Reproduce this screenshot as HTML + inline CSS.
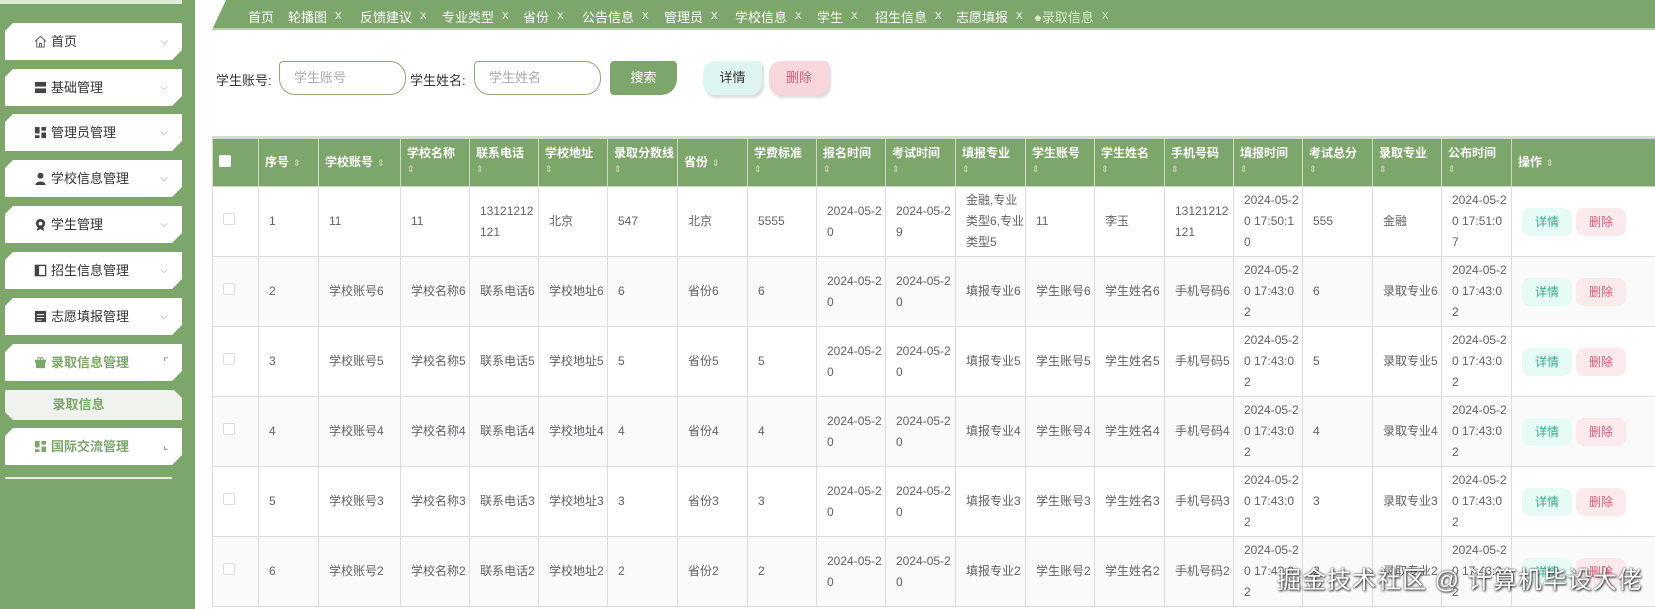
<!DOCTYPE html>
<html><head><meta charset="utf-8"><style>
*{box-sizing:border-box;margin:0;padding:0}
body{width:1655px;height:609px;overflow:hidden;background:#fff;font-family:"Liberation Sans","Noto Sans CJK SC",sans-serif;font-size:12px;color:#606266;position:relative}
.side{position:absolute;left:0;top:0;width:195px;height:609px;background:#7da66a}
.side .topline{position:absolute;left:0;top:0;width:182px;height:4px;background:#dfe9d8}
.item{position:absolute;left:5px;width:177px;height:37px;background:#fff;clip-path:polygon(8px 0,100% 0,100% calc(100% - 10px),calc(100% - 10px) 100%,0 100%,0 8px);font-size:13px;color:#333;line-height:37px;padding-left:46px}
.item .ic{position:absolute;left:29px;top:12px;width:13px;height:13px}
.item .ar{position:absolute;right:14px;top:0;color:#999;font-size:10px}
.item.g{color:#7da66a;font-weight:bold}
.sub{position:absolute;left:5px;top:390px;width:177px;height:30px;background:#f0f2ee;clip-path:polygon(0 0,calc(100% - 8px) 0,100% 8px,100% 100%,8px 100%,0 calc(100% - 8px));line-height:30px;text-align:center;color:#7da66a;font-size:13px;font-weight:bold;padding-right:30px}
.tabs{position:absolute;left:212px;top:0;width:1443px;height:30px;background:#7da66a;clip-path:polygon(14px 0,100% 0,100% 100%,0 100%);border-bottom:2px solid #b9cfae}
.tabs span{position:absolute;top:7px;color:#fff;font-size:13px}
.tabs i{font-style:normal;font-size:10px;margin-left:8px;position:relative;top:-3px}
.lbl{position:absolute;top:70px;font-size:13px;color:#333}
.inp{position:absolute;top:61px;height:34px;border:1px solid #8aa87a;border-radius:4px 16px 16px 16px;color:#aaa;font-size:13px;line-height:32px;padding-left:14px}
.btn{position:absolute;top:61px;height:34px;font-size:13px;line-height:34px;text-align:center}
table{position:absolute;left:212px;top:136px;border-collapse:collapse;table-layout:fixed;width:1533px;border-top:3px solid #d8d8d8}
th{background:#7da66a;color:#fff;font-weight:bold;font-size:12px;text-align:left;vertical-align:top;padding:6px 2px 0 6px;height:49px;border:1px solid #cfd9c8;line-height:16px;white-space:nowrap;overflow:hidden}
th small{display:block;color:#b7cdaa;font-size:9px}
th.m{vertical-align:middle;padding-top:0}
th.m small{display:inline;margin-left:4px}
td{border:1px solid #dcdcdc;padding:0 1px 0 10px;height:70px;line-height:21px;word-break:break-all;font-size:12px;color:#606266}
tr:nth-child(odd) td{background:#fafafa}
td.n{white-space:nowrap;overflow:hidden}
.cb{display:inline-block;width:12px;height:12px;border:1px solid #ddd;border-radius:2px;background:#fff}
.b1,.b2{display:inline-block;width:50px;height:28px;line-height:28px;text-align:center;border-radius:8px;font-size:12px}
.b1{background:#e6faf6;color:#3aa98a}.b2{background:#fbeaec;color:#d0607a;margin-left:4px}
.wm{position:absolute;left:1277px;top:560px;font-size:24px;color:#fff;text-shadow:0 0 2px #333,1px 1px 2px #333;white-space:nowrap;letter-spacing:1px}
</style></head><body>
<div class="side"><div class="topline"></div>
<div class="item" style="top:23px"><svg class="ic" viewBox="0 0 14 14"><path d="M1 7L7 1.5 13 7M3 6v7h8V6M6 13V9h2v4" fill="none" stroke="#555" stroke-width="1"/></svg>首页<span class="ar">⌵</span></div>
<div class="item" style="top:69px"><svg class="ic" viewBox="0 0 14 14"><rect x="1" y="1" width="12" height="5" fill="#444"/><rect x="1" y="8" width="12" height="5" fill="#444"/></svg>基础管理<span class="ar">⌵</span></div>
<div class="item" style="top:114px"><svg class="ic" viewBox="0 0 14 14"><rect x="1" y="1" width="5" height="7" fill="#444"/><rect x="8" y="1" width="5" height="4" fill="#444"/><rect x="8" y="7" width="5" height="6" fill="#444"/><rect x="1" y="10" width="5" height="3" fill="#444"/></svg>管理员管理<span class="ar">⌵</span></div>
<div class="item" style="top:160px"><svg class="ic" viewBox="0 0 14 14"><circle cx="7" cy="4" r="3.2" fill="#444"/><path d="M1.5 14c0-5 11-5 11 0z" fill="#444"/></svg>学校信息管理<span class="ar">⌵</span></div>
<div class="item" style="top:206px"><svg class="ic" viewBox="0 0 14 14"><circle cx="7" cy="6" r="5" fill="#444"/><circle cx="7" cy="6" r="2" fill="#fff"/><path d="M4 10l-1 4 4-2 4 2-1-4z" fill="#444"/></svg>学生管理<span class="ar">⌵</span></div>
<div class="item" style="top:252px"><svg class="ic" viewBox="0 0 14 14"><rect x="1.5" y="1.5" width="11" height="11" fill="none" stroke="#444" stroke-width="1.5"/><rect x="1.5" y="1.5" width="4" height="11" fill="#444"/></svg>招生信息管理<span class="ar">⌵</span></div>
<div class="item" style="top:298px"><svg class="ic" viewBox="0 0 14 14"><rect x="1" y="1" width="12" height="12" fill="#444"/><path d="M3 5h8M3 8h8M3 11h5" stroke="#fff"/></svg>志愿填报管理<span class="ar">⌵</span></div>
<div class="item g" style="top:344px"><svg class="ic" viewBox="0 0 14 14"><path d="M1 4h12v3H1zM2 7h10v6H2z" fill="#7da66a"/><path d="M4 4c0-3 3-3 3 0 0-3 3-3 3 0" fill="none" stroke="#7da66a"/></svg>录取信息管理<span class="ar">⌜</span></div>
<div class="sub">录取信息</div>
<div class="item g" style="top:428px"><svg class="ic" viewBox="0 0 14 14"><rect x="1" y="1" width="5" height="7" fill="#7da66a"/><rect x="8" y="1" width="5" height="4" fill="#7da66a"/><rect x="8" y="7" width="5" height="6" fill="#7da66a"/><rect x="1" y="10" width="5" height="3" fill="#7da66a"/></svg>国际交流管理<span class="ar">⌞</span></div>
<div style="position:absolute;left:5px;top:477px;width:167px;height:2px;background:#e6eee0"></div>
</div>
<div class="tabs">
<span style="left:36px">首页</span>
<span style="left:76px">轮播图<i>X</i></span>
<span style="left:148px">反馈建议<i>X</i></span>
<span style="left:230px">专业类型<i>X</i></span>
<span style="left:311px">省份<i>X</i></span>
<span style="left:370px">公告信息<i>X</i></span>
<span style="left:452px">管理员<i>X</i></span>
<span style="left:523px">学校信息<i>X</i></span>
<span style="left:605px">学生<i>X</i></span>
<span style="left:663px">招生信息<i>X</i></span>
<span style="left:744px">志愿填报<i>X</i></span>
<span style="left:822px;color:#d8ecc8">●录取信息<i>X</i></span>
</div>
<div class="lbl" style="left:216px">学生账号:</div>
<div class="inp" style="left:279px;width:127px">学生账号</div>
<div class="lbl" style="left:410px">学生姓名:</div>
<div class="inp" style="left:474px;width:127px">学生姓名</div>
<div class="btn" style="left:610px;width:67px;background:#7da66a;color:#fff;border-radius:4px 4px 16px 4px">搜索</div>
<div class="btn" style="left:703px;width:59px;background:#dff5f2;color:#333;border-radius:12px 4px 12px 12px;box-shadow:2px 3px 2px #ddd">详情</div>
<div class="btn" style="left:769px;width:60px;background:#f8d6dc;color:#d0607a;border-radius:12px 4px 12px 12px;box-shadow:2px 3px 2px #ddd">删除</div>
<table>
<colgroup><col style="width:46px"><col style="width:60px"><col style="width:82px"><col style="width:69px"><col style="width:69px"><col style="width:69px"><col style="width:70px"><col style="width:70px"><col style="width:69px"><col style="width:69px"><col style="width:70px"><col style="width:70px"><col style="width:69px"><col style="width:70px"><col style="width:69px"><col style="width:69px"><col style="width:70px"><col style="width:69px"><col style="width:70px"><col style="width:234px"></colgroup>
<tr><th class="m"><span class="cb" style="border:none"></span></th><th class="m">序号<small>⇕</small></th><th class="m">学校账号<small>⇕</small></th><th>学校名称<small>⇕</small></th><th>联系电话<small>⇕</small></th><th>学校地址<small>⇕</small></th><th>录取分数线<small>⇕</small></th><th class="m">省份<small>⇕</small></th><th>学费标准<small>⇕</small></th><th>报名时间<small>⇕</small></th><th>考试时间<small>⇕</small></th><th>填报专业<small>⇕</small></th><th>学生账号<small>⇕</small></th><th>学生姓名<small>⇕</small></th><th>手机号码<small>⇕</small></th><th>填报时间<small>⇕</small></th><th>考试总分<small>⇕</small></th><th>录取专业<small>⇕</small></th><th>公布时间<small>⇕</small></th><th class="m">操作<small>⇕</small></th></tr>
<tr><td><span class="cb"></span></td><td>1</td><td>11</td><td>11</td><td>13121212<br>121</td><td>北京</td><td>547</td><td>北京</td><td>5555</td><td>2024-05-2<br>0</td><td>2024-05-2<br>9</td><td>金融,专业类型6,专业类型5</td><td>11</td><td>李玉</td><td>13121212<br>121</td><td>2024-05-2<br>0 17:50:1<br>0</td><td>555</td><td>金融</td><td>2024-05-2<br>0 17:51:0<br>7</td><td><span class="b1">详情</span><span class="b2">删除</span></td></tr>
<tr><td><span class="cb"></span></td><td>2</td><td class="n">学校账号6</td><td class="n">学校名称6</td><td class="n">联系电话6</td><td class="n">学校地址6</td><td>6</td><td>省份6</td><td>6</td><td>2024-05-2<br>0</td><td>2024-05-2<br>0</td><td class="n">填报专业6</td><td class="n">学生账号6</td><td class="n">学生姓名6</td><td class="n">手机号码6</td><td>2024-05-2<br>0 17:43:0<br>2</td><td>6</td><td class="n">录取专业6</td><td>2024-05-2<br>0 17:43:0<br>2</td><td><span class="b1">详情</span><span class="b2">删除</span></td></tr>
<tr><td><span class="cb"></span></td><td>3</td><td class="n">学校账号5</td><td class="n">学校名称5</td><td class="n">联系电话5</td><td class="n">学校地址5</td><td>5</td><td>省份5</td><td>5</td><td>2024-05-2<br>0</td><td>2024-05-2<br>0</td><td class="n">填报专业5</td><td class="n">学生账号5</td><td class="n">学生姓名5</td><td class="n">手机号码5</td><td>2024-05-2<br>0 17:43:0<br>2</td><td>5</td><td class="n">录取专业5</td><td>2024-05-2<br>0 17:43:0<br>2</td><td><span class="b1">详情</span><span class="b2">删除</span></td></tr>
<tr><td><span class="cb"></span></td><td>4</td><td class="n">学校账号4</td><td class="n">学校名称4</td><td class="n">联系电话4</td><td class="n">学校地址4</td><td>4</td><td>省份4</td><td>4</td><td>2024-05-2<br>0</td><td>2024-05-2<br>0</td><td class="n">填报专业4</td><td class="n">学生账号4</td><td class="n">学生姓名4</td><td class="n">手机号码4</td><td>2024-05-2<br>0 17:43:0<br>2</td><td>4</td><td class="n">录取专业4</td><td>2024-05-2<br>0 17:43:0<br>2</td><td><span class="b1">详情</span><span class="b2">删除</span></td></tr>
<tr><td><span class="cb"></span></td><td>5</td><td class="n">学校账号3</td><td class="n">学校名称3</td><td class="n">联系电话3</td><td class="n">学校地址3</td><td>3</td><td>省份3</td><td>3</td><td>2024-05-2<br>0</td><td>2024-05-2<br>0</td><td class="n">填报专业3</td><td class="n">学生账号3</td><td class="n">学生姓名3</td><td class="n">手机号码3</td><td>2024-05-2<br>0 17:43:0<br>2</td><td>3</td><td class="n">录取专业3</td><td>2024-05-2<br>0 17:43:0<br>2</td><td><span class="b1">详情</span><span class="b2">删除</span></td></tr>
<tr><td><span class="cb"></span></td><td>6</td><td class="n">学校账号2</td><td class="n">学校名称2</td><td class="n">联系电话2</td><td class="n">学校地址2</td><td>2</td><td>省份2</td><td>2</td><td>2024-05-2<br>0</td><td>2024-05-2<br>0</td><td class="n">填报专业2</td><td class="n">学生账号2</td><td class="n">学生姓名2</td><td class="n">手机号码2</td><td>2024-05-2<br>0 17:43:0<br>2</td><td>2</td><td class="n">录取专业2</td><td>2024-05-2<br>0 17:43:0<br>2</td><td><span class="b1">详情</span><span class="b2">删除</span></td></tr>
</table>
<div class="wm">掘金技术社区 @ 计算机毕设大佬</div>
</body></html>
